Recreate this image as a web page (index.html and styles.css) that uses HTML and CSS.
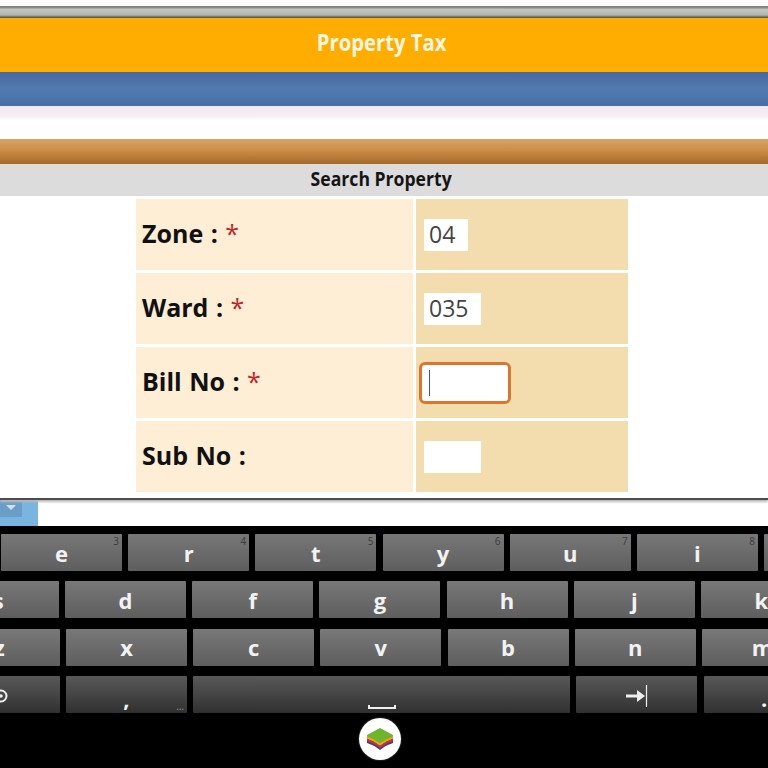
FILE: index.html
```html
<!DOCTYPE html>
<html lang="en">
<head>
<meta charset="utf-8">
<title>Property Tax</title>
<link rel="stylesheet" href="styles.css">
</head>
<body>
<div class="screen">
  <div class="status-gap"></div>
  <div class="chrome-bar"></div>
  <header class="title-bar"><span class="squeeze">Property Tax</span></header>
  <div class="blue-bar"></div>
  <div class="spacer"></div>
  <div class="brown-bar"></div>
  <div class="section-title"><span class="squeeze">Search Property</span></div>
  <main class="form-area">
    <div class="form-grid">
      <div class="cell label"><span>Zone : <em>*</em></span></div>
      <div class="cell field"><input class="input w-s" value="04"></div>
      <div class="cell label"><span>Ward : <em>*</em></span></div>
      <div class="cell field"><input class="input w-m" value="035"></div>
      <div class="cell label"><span>Bill No : <em>*</em></span></div>
      <div class="cell field"><div class="input-focus"><span class="caret"></span></div></div>
      <div class="cell label"><span>Sub No :</span></div>
      <div class="cell field"><input class="input w-m" value=""></div>
    </div>
  </main>
  <div class="candidate-strip">
    <div class="candidate-tab"><div class="candidate-btn"><span class="tri"></span></div></div>
  </div>
  <section class="keyboard">
    <div class="kb-row r1">
      <div class="key">e<sup class="hint">3</sup></div>
      <div class="key">r<sup class="hint">4</sup></div>
      <div class="key">t<sup class="hint">5</sup></div>
      <div class="key">y<sup class="hint">6</sup></div>
      <div class="key">u<sup class="hint">7</sup></div>
      <div class="key">i<sup class="hint">8</sup></div>
      <div class="key">o<sup class="hint">9</sup></div>
    </div>
    <div class="kb-row r2">
      <div class="key">s</div><div class="key">d</div><div class="key">f</div><div class="key">g</div>
      <div class="key">h</div><div class="key">j</div><div class="key">k</div>
    </div>
    <div class="kb-row r3">
      <div class="key">z</div><div class="key">x</div><div class="key">c</div><div class="key">v</div>
      <div class="key">b</div><div class="key">n</div><div class="key">m</div>
    </div>
    <div class="kb-row r3 dark">
      <div class="key">
        <svg class="gear" width="16" height="16" viewBox="0 0 16 16"><circle cx="8" cy="8" r="5.500" fill="none" stroke="#eee" stroke-width="2"/><circle cx="8" cy="8" r="1.800" fill="#eee"/></svg>
      </div>
      <div class="key low">,<span class="dots">…</span></div>
      <div class="key space">
        <svg width="28" height="6" viewBox="0 0 28 6"><path d="M1 1v3h26V1" fill="none" stroke="#eee" stroke-width="2"/></svg>
      </div>
      <div class="key">
        <svg class="tab-icon" width="22" height="22" viewBox="0 0 22 22"><path d="M0 11h13" stroke="#eee" stroke-width="3"/><path d="M11 5l8 6-8 6z" fill="#eee"/><path d="M20.500 0v22" stroke="#eee" stroke-width="1.200"/></svg>
      </div>
      <div class="key low">.</div>
    </div>
  </section>
  <footer class="nav-bar">
    <div class="logo">
      <svg width="28" height="24" viewBox="0 0 28 24">
        <path d="M1 13q6 2 13 7 7-5 13-7v3q-7 2-13 7-6-5-13-7z" fill="#4a3a8c"/>
        <path d="M1 11q6 2 13 7 7-5 13-7v3q-7 2-13 7-6-5-13-7z" fill="#c23a2a"/>
        <path d="M1 8.500q6 2 13 7 7-5 13-7v3q-7 2-13 7-6-5-13-7z" fill="#eda51f"/>
        <path d="M1 8l13-7 13 7v1.500q-7 2-13 7-6-5-13-7z" fill="#6fb52c"/>
      </svg>
    </div>
  </footer>
</div>
</body>
</html>
```
FILE: styles.css
```css
* { box-sizing: border-box; }
html, body { margin: 0; padding: 0; background: #000; }
.screen { width: 768px; height: 768px; overflow: hidden; display: flex; flex-direction: column; font-family: "Open Sans", "Noto Sans", sans-serif; background: #fff; }

.status-gap { height: 6px; background: #fdfbfb; }
.chrome-bar { height: 12px; background: linear-gradient(#7d7f7d 0, #8b8d8b 17%, #c4c6c4 25%, #b4b6b4 75%, #85827c 85%, #5c4a34 100%); }
.title-bar { height: 54px; padding: 0 5px 6px 0; background: #ffae00; display: flex; align-items: center; justify-content: center; color: #fdf6e3; font-size: 23px; font-weight: 700; }
.squeeze { display: inline-block; transform: scaleX(.88); }
.blue-bar { height: 34px; background: linear-gradient(#46699f 0, #537ab0 50%, #466fa6 100%); }
.spacer { height: 33px; background: linear-gradient(#f3e8ef 0, #f6eff4 30%, #fff 45%); }
.brown-bar { height: 25px; background: linear-gradient(#d4a468 0, #cb8d48 45%, #a46a2a 100%); }
.section-title { height: 32px; padding: 0 5px 4px 0; background: #dcdcdc; display: flex; align-items: center; justify-content: center; color: #151515; font-size: 20px; font-weight: 700; }

.form-area { height: 304px; flex: none; padding: 3px 0 0 136px; background: #fff; border-bottom: 2px solid #4c4c4c; box-shadow: 0 2px 2px #bbb; position: relative; }
.form-grid { width: 492px; display: grid; grid-template-columns: 277px 212px; grid-auto-rows: 71px; column-gap: 3px; row-gap: 3px; }
.cell { display: flex; align-items: center; }
.label { background: #fdeed5; padding: 0 0 3px 6px; font-size: 25px; font-weight: 700; word-spacing: 1px; color: #111; }
.label em { color: #c0272d; font-style: normal; font-weight: 400; }
.field { background: #f3dcae; padding-left: 8px; }
.input { height: 32px; border: 0; padding: 0 5px 2px; margin: 0; background: #fff; font: 400 23px "Open Sans", "Noto Sans", sans-serif; color: #444; outline: 0; border-radius: 0; }
.w-s { width: 44px; }
.w-m { width: 57px; }
.input-focus { width: 92px; height: 42px; margin-left: -5px; background: #fff; border: 3px solid #d9772f; border-radius: 6px; display: flex; align-items: center; padding-left: 7px; }
.caret { width: 1px; height: 26px; background: #3d5a80; }

.candidate-strip { height: 26px; background: #fff; flex: none; }
.candidate-tab { width: 38px; height: 26px; background: #7ab5e2; }
.candidate-btn { width: 22px; height: 17px; background: #6a9ec8; display: flex; justify-content: center; padding-top: 5px; }
.tri { width: 0; height: 0; border-left: 5px solid transparent; border-right: 5px solid transparent; border-top: 5px solid #cfe3f3; }

.keyboard { height: 188px; background: #000; padding-top: 8px; display: flex; flex-direction: column; row-gap: 10.330px; overflow: hidden; flex: none; }
.kb-row { height: 37px; display: flex; column-gap: 6.200px; flex: none; }
.r1 { margin-left: 1px; }
.r2 { margin-left: -62.200px; }
.r3 { margin-left: -61.200px; }
.key { position: relative; flex: none; width: 121px; height: 37px; background: linear-gradient(#787878 0, #6c6c6c 45%, #5e5e5e 100%); border-radius: 1px; color: #f2f2f2; font-size: 22px; font-weight: 700; display: flex; align-items: center; justify-content: center; line-height: 1; }
.dark .key { background: linear-gradient(#585858 0, #474747 45%, #303030 100%); }
.hint { position: absolute; top: 2px; right: 3px; font-size: 10px; font-weight: 400; color: #3c3c3c; line-height: 1; }
.key.low { padding-top: 7px; }
.dots { position: absolute; right: 3px; bottom: 2px; font-size: 10px; font-weight: 400; color: #9a9a9a; line-height: 1; }
.key.space { width: 377px; align-items: flex-end; padding-bottom: 3px; }
.gear { margin: 3px 0 0 4px; }
.tab-icon { margin-top: 3px; }

.nav-bar { flex: 1; background: #000; display: flex; justify-content: center; align-items: center; }
.logo { width: 42px; height: 42px; margin: 0 8px 4px 0; border-radius: 50%; background: radial-gradient(#fff 76%, #e2dcdc 88%, #9a9090 100%); box-shadow: 0 0 2px #665; display: flex; align-items: center; justify-content: center; }
```
